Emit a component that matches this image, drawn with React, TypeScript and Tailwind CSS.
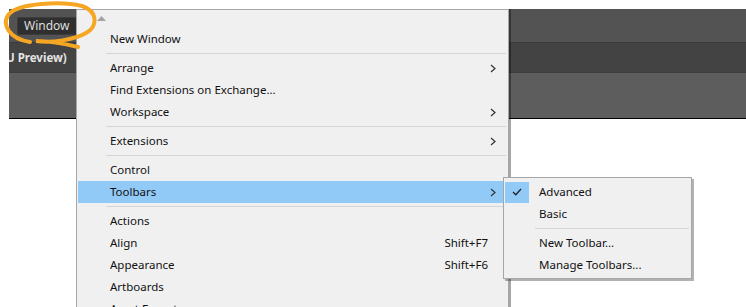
import { Fragment } from 'react';

type Item = { label?: string; sub?: boolean; shortcut?: string; active?: boolean; sep?: boolean };

const items: Item[] = [
  { label: 'New Window' },
  { sep: true },
  { label: 'Arrange', sub: true },
  { label: 'Find Extensions on Exchange...' },
  { label: 'Workspace', sub: true },
  { sep: true },
  { label: 'Extensions', sub: true },
  { sep: true },
  { label: 'Control' },
  { label: 'Toolbars', sub: true, active: true },
  { sep: true },
  { label: 'Actions' },
  { label: 'Align', shortcut: 'Shift+F7' },
  { label: 'Appearance', shortcut: 'Shift+F6' },
  { label: 'Artboards' },
  { label: 'Asset Export' },
];

function Chevron() {
  return (
    <svg width="6" height="9" viewBox="0 0 6 9" className="text-[#333]">
      <path d="M1 1 L5 4.5 L1 8" fill="none" stroke="currentColor" strokeWidth="1.2" />
    </svg>
  );
}

export default function App() {
  return (
    <div className="relative w-[746px] h-[307px] overflow-hidden bg-white" style={{ fontFamily: '"Noto Sans", "Liberation Sans", sans-serif' }}>
      {/* App chrome behind the menu */}
      <div className="ml-[9px] mt-[9px] flex flex-col">
        <div className="h-[33px] bg-[#535353] flex items-center pl-[8px]">
          <div className="flex items-center h-[18px] px-[6px] bg-[#2f2f2f] border border-[#3c3c3c] rounded-[2px] text-[12px] text-[#dedede]">
            Window
          </div>
        </div>
        <div className="h-px bg-[#3a3a3a]" />
        <div className="h-[29px] bg-[#434343] flex items-center overflow-hidden">
          <span className="-ml-[3px] text-[11.5px] font-bold text-[#e4e4e4]">U Preview)</span>
        </div>
        <div className="h-px bg-[#3d3d3d]" />
        <div className="h-[45px] bg-[#5d5d5d]" />
        <div className="h-px bg-black" />
      </div>

      {/* Window menu */}
      <div className="absolute left-[76px] top-[9px] w-[433px] h-[320px] bg-[#f0f0f0] border border-[#a6a6a6] pl-px pr-[2px] pt-[18px] shadow-[2px_0_0_rgba(0,0,0,0.35)]">
        <svg className="absolute left-[20px] top-[6px]" width="9" height="5" viewBox="0 0 9 5">
          <path d="M0 5 L4.5 0 L9 5 Z" fill="#a3a3a3" />
        </svg>
        {items.map((it, i) =>
          it.sep ? (
            <div key={i} className="h-[7px] flex items-center pl-[28px]">
              <div className="h-px w-full bg-[#d5d5d5]" />
            </div>
          ) : (
            <div
              key={i}
              className={`h-[22px] flex items-center pl-[32px] pr-[10px] text-[11.5px] text-[#111] ${it.active ? 'bg-[#91c9f7]' : ''}`}
            >
              <span className="flex-1">{it.label}</span>
              {it.shortcut && <span className="mr-[8px]">{it.shortcut}</span>}
              {it.sub && <Chevron />}
            </div>
          ),
        )}
      </div>

      {/* Toolbars submenu */}
      <div className="absolute left-[503px] top-[177px] w-[189px] h-[102px] bg-[#f0f0f0] border border-[#a6a6a6] pt-[3px] pl-px shadow-[2px_2px_0_rgba(0,0,0,0.3)]">
        {[
          { label: 'Advanced', checked: true },
          { label: 'Basic' },
          { sep: true },
          { label: 'New Toolbar...' },
          { label: 'Manage Toolbars...' },
        ].map((s, i) => (
          <Fragment key={i}>
            {'sep' in s ? (
              <div className="h-[7px] flex items-center pl-[30px] pr-[2px]">
                <div className="h-px w-full bg-[#d5d5d5]" />
              </div>
            ) : (
              <div className="h-[22px] flex items-center text-[11.5px] text-[#111]">
                <div className={`w-[24px] h-[21px] flex items-center justify-center ${s.checked ? 'bg-[#91c9f7]' : ''}`}>
                  {s.checked && (
                    <svg width="10" height="8" viewBox="0 0 10 8">
                      <path d="M1 4 L3.8 6.8 L9 1" fill="none" stroke="#222" strokeWidth="1.3" />
                    </svg>
                  )}
                </div>
                <span className="ml-[10px]">{s.label}</span>
              </div>
            )}
          </Fragment>
        ))}
      </div>

      {/* Orange annotation loop */}
      <svg className="absolute left-0 top-0 pointer-events-none" width="110" height="60" viewBox="0 0 110 60">
        <path
          d="M30 42 C 9 39, 1 24, 9 14 C 19 3, 62 1, 82 6 C 98 11, 98 27, 86 33 C 74 40, 52 43, 36 41 C 50 41, 66 44, 78 47"
          fill="none"
          stroke="#f5a623"
          strokeWidth="4"
          strokeLinecap="round"
        />
      </svg>
    </div>
  );
}
